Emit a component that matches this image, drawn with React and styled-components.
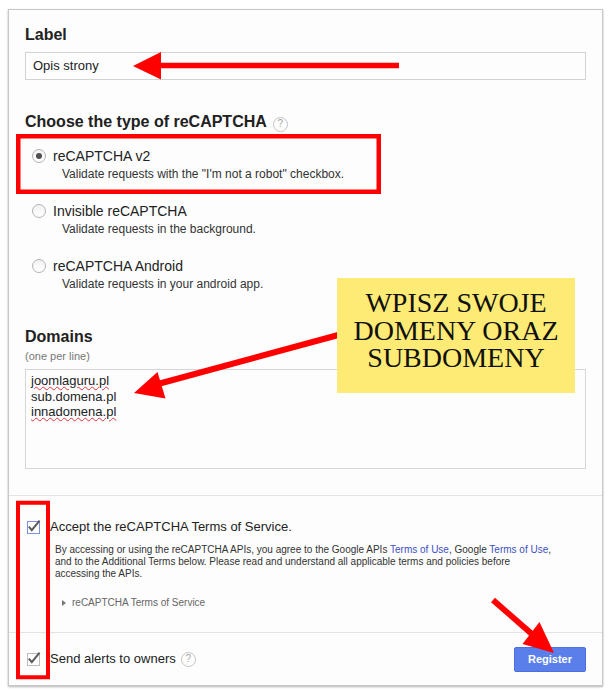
import React from "react";
import styled, { createGlobalStyle } from "styled-components";

const GlobalStyle = createGlobalStyle`
  html, body { margin: 0; padding: 0; background: #ffffff; }
  body { font-family: "Liberation Sans", Arial, sans-serif; color: #222; }
`;

const Page = styled.div`
  position: relative;
  width: 613px;
  height: 693px;
  padding: 9px 0 0 8px;
  box-sizing: border-box;
  overflow: hidden;
`;

const Card = styled.div`
  width: 595px;
  height: 677px;
  box-sizing: border-box;
  border: 1px solid #c8c8c8;
  background: #fcfdfc;
  box-shadow: 0 1px 2px rgba(0, 0, 0, 0.3);
  display: flex;
  flex-direction: column;
`;

const TopSection = styled.div`
  height: 486px;
  box-sizing: border-box;
  padding: 15px 16px 0;
  border-bottom: 1px solid #e3e3e3;
`;

const Heading = styled.h2`
  margin: ${(p) => p.$mt || 0}px 0 0;
  font-size: 16px;
  line-height: 20px;
  font-weight: bold;
  color: #212121;
  display: flex;
  align-items: center;
`;

const Help = styled.span`
  width: ${(p) => p.$size}px;
  height: ${(p) => p.$size}px;
  box-sizing: border-box;
  margin-left: ${(p) => p.$ml}px;
  border: 1px solid #c4c4c4;
  border-radius: 50%;
  color: #a8a8a8;
  font-size: ${(p) => p.$size - 5}px;
  font-weight: normal;
  line-height: 1;
  display: inline-flex;
  align-items: center;
  justify-content: center;
  flex: none;
  position: relative;
  top: ${(p) => p.$top || 0}px;
`;

const TextInput = styled.div`
  margin-top: 7px;
  height: 28px;
  box-sizing: border-box;
  border: 1px solid #d3d3d3;
  background: #fdfdfd;
  padding: 0 7px;
  font-size: 13px;
  line-height: 26px;
  color: #222;
`;

const RadioList = styled.div`
  margin-top: 15px;
  display: flex;
  flex-direction: column;
  gap: 20px;
`;

const OptionRow = styled.div`
  display: flex;
  align-items: center;
  gap: 7px;
  padding-left: 7px;
  height: 18px;
  font-size: 14px;
  line-height: 18px;
  color: #222;
`;

const OptionDesc = styled.div`
  margin-top: 1px;
  padding-left: 37px;
  font-size: 12px;
  line-height: 16px;
  color: #333;
`;

const Radio = styled.span`
  width: 14px;
  height: 14px;
  box-sizing: border-box;
  border-radius: 50%;
  border: 1px solid #b3b3b3;
  background: linear-gradient(#f2f2f2, #ffffff);
  display: inline-flex;
  align-items: center;
  justify-content: center;
  flex: none;
  &::after {
    content: "";
    width: 6px;
    height: 6px;
    border-radius: 50%;
    background: ${(p) => (p.$checked ? "#505050" : "transparent")};
  }
`;

const Hint = styled.div`
  margin-top: 2px;
  font-size: 11px;
  line-height: 14px;
  color: #777;
`;

const DomainBox = styled.div`
  margin-top: 6px;
  height: 100px;
  box-sizing: border-box;
  border: 1px solid #d6d6d6;
  background: #fdfdfd;
  padding: 3px 5px;
  font-size: 13px;
  line-height: 15.6px;
  color: #222;
`;

const DomainLine = styled.div`
  span {
    text-decoration: ${(p) => (p.$misspelled ? "underline wavy #e8323c" : "none")};
    text-decoration-thickness: 1px;
    text-underline-offset: 1px;
  }
`;

const Footer = styled.div`
  height: 137px;
  box-sizing: border-box;
  padding: 23px 16px 0 18px;
  border-bottom: 1px solid #e3e3e3;
`;

const CheckRow = styled.div`
  display: flex;
  align-items: center;
  gap: 10px;
  height: 16px;
  font-size: 13px;
  line-height: 16px;
  color: #222;
`;

const CheckSvg = styled.svg`
  flex: none;
  overflow: visible;
`;

const Terms = styled.p`
  margin: 9px 0 0 28px;
  font-size: 10px;
  line-height: 12px;
  color: #333;
  white-space: nowrap;
`;

const TermsLink = styled.a`
  color: #3d4fc4;
  text-decoration: none;
`;

const Toggle = styled.div`
  margin: 16px 0 0 35px;
  display: flex;
  align-items: center;
  gap: 6px;
  font-size: 10px;
  line-height: 13px;
  color: #666;
`;

const Caret = styled.span`
  width: 0;
  height: 0;
  border-top: 3.5px solid transparent;
  border-bottom: 3.5px solid transparent;
  border-left: 4px solid #777;
`;

const BottomBar = styled.div`
  flex: 1;
  display: flex;
  align-items: center;
  justify-content: space-between;
  padding: 0 16px 0 18px;
`;

const RegisterButton = styled.button`
  width: 72px;
  height: 25px;
  box-sizing: border-box;
  border: 1px solid #4c71de;
  border-radius: 2px;
  background: #5a7fea;
  color: #ffffff;
  font-family: "Liberation Sans", Arial, sans-serif;
  font-size: 11px;
  font-weight: bold;
  padding: 0;
  cursor: pointer;
`;

const Overlay = styled.svg`
  position: absolute;
  left: 0;
  top: 0;
  pointer-events: none;
`;

const Note = styled.div`
  position: absolute;
  left: 337px;
  top: 278px;
  width: 238px;
  height: 115px;
  box-sizing: border-box;
  padding: 11px 10px 0;
  background: #fdeb75;
  font-family: "Liberation Serif", "Times New Roman", serif;
  font-size: 28px;
  line-height: 27.5px;
  text-align: center;
  color: #111;
`;

function Checkbox({ blue }) {
  return (
    <CheckSvg width="13" height="13" viewBox="0 0 13 13">
      <rect x="0.5" y="0.5" width="12" height="12" fill="#ffffff" stroke={blue ? "#7a92e4" : "#bcbcbc"} />
      <path d="M1.8 5.6 L4.8 9.1 L12.6 -0.4" fill="none" stroke="#5b5b5b" strokeWidth="2" />
    </CheckSvg>
  );
}

const options = [
  { label: "reCAPTCHA v2", desc: 'Validate requests with the "I\'m not a robot" checkbox.', checked: true },
  { label: "Invisible reCAPTCHA", desc: "Validate requests in the background." },
  { label: "reCAPTCHA Android", desc: "Validate requests in your android app." },
];

const domains = [
  { text: "joomlaguru.pl", bad: true },
  { text: "sub.domena.pl", bad: false },
  { text: "innadomena.pl", bad: true },
];

export default function App() {
  return (
    <>
      <GlobalStyle />
      <Page>
        <Card>
          <TopSection>
            <Heading>Label</Heading>
            <TextInput>Opis strony</TextInput>

            <Heading $mt={32}>
              Choose the type of reCAPTCHA
              <Help $size={15} $ml={6} $top={2}>?</Help>
            </Heading>
            <RadioList>
              {options.map((o) => (
                <div key={o.label}>
                  <OptionRow>
                    <Radio $checked={o.checked} />
                    {o.label}
                  </OptionRow>
                  <OptionDesc>{o.desc}</OptionDesc>
                </div>
              ))}
            </RadioList>

            <Heading $mt={35}>Domains</Heading>
            <Hint>(one per line)</Hint>
            <DomainBox>
              {domains.map((d) => (
                <DomainLine key={d.text} $misspelled={d.bad}>
                  <span>{d.text}</span>
                </DomainLine>
              ))}
            </DomainBox>
          </TopSection>

          <Footer>
            <CheckRow>
              <Checkbox blue />
              Accept the reCAPTCHA Terms of Service.
            </CheckRow>
            <Terms>
              By accessing or using the reCAPTCHA APIs, you agree to the Google APIs{" "}
              <TermsLink>Terms of Use</TermsLink>, Google <TermsLink>Terms of Use</TermsLink>,
              <br />
              and to the Additional Terms below. Please read and understand all applicable terms and policies before
              <br />
              accessing the APIs.
            </Terms>
            <Toggle>
              <Caret />
              reCAPTCHA Terms of Service
            </Toggle>
          </Footer>

          <BottomBar>
            <CheckRow>
              <Checkbox />
              Send alerts to owners
              <Help $size={15} $ml={-5}>?</Help>
            </CheckRow>
            <RegisterButton>Register</RegisterButton>
          </BottomBar>
        </Card>

        <Overlay width="613" height="693" viewBox="0 0 613 693">
          <rect x="18.25" y="136.25" width="360.5" height="55.5" fill="none" stroke="#ff0000" strokeWidth="4.5" />
          <rect x="18" y="502.75" width="30" height="174.5" fill="none" stroke="#ff0000" strokeWidth="4" />
          <line x1="158" y1="65.5" x2="399" y2="65.5" stroke="#ff0000" strokeWidth="5.5" />
          <polygon points="133,66 161,52 161,79.5" fill="#ff0000" />
          <line x1="342" y1="334" x2="158" y2="384" stroke="#ff0000" strokeWidth="6" />
          <polygon points="134,393 157.5,372 165.5,398.5" fill="#ff0000" />
          <line x1="493" y1="600" x2="533" y2="635" stroke="#ff0000" strokeWidth="6" />
          <polygon points="554,653 539.5,622 522.5,644" fill="#ff0000" />
        </Overlay>
        <Note>WPISZ SWOJE DOMENY ORAZ SUBDOMENY</Note>
      </Page>
    </>
  );
}
